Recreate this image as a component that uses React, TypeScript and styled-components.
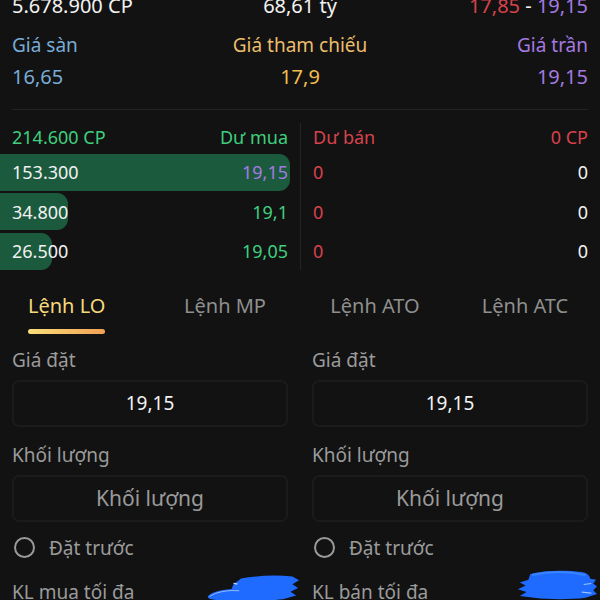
import React from "react";
import styled, { createGlobalStyle } from "styled-components";

const GlobalStyle = createGlobalStyle`
  html, body {
    margin: 0;
    padding: 0;
    background: #121212;
    overflow: hidden;
  }
  body {
    font-family: "Noto Sans", "Open Sans", sans-serif;
    color: #f2f2f2;
  }
`;

const C = {
  blue: "#78acd6",
  yellow: "#ebbd6c",
  purple: "#a47ae0",
  green: "#3fcf7e",
  red: "#d8424c",
  gray: "#9b9b9b",
  white: "#f2f2f2",
};

interface BidRow {
  vol: string;
  price: string;
  priceColor: string;
  width: number;
}

const bids: BidRow[] = [
  { vol: "153.300", price: "19,15", priceColor: C.purple, width: 290 },
  { vol: "34.800", price: "19,1", priceColor: C.green, width: 68 },
  { vol: "26.500", price: "19,05", priceColor: C.green, width: 52 },
];

const tabs = ["Lệnh LO", "Lệnh MP", "Lệnh ATO", "Lệnh ATC"];

const App: React.FC = () => {
  return (
    <Screen>
      <GlobalStyle />
      <Summary>
        <Txt>5.678.900 CP</Txt>
        <Txt align="center">68,61 tỷ</Txt>
        <Txt align="right">
          <Colored color={C.red}>17,85</Colored> - <Colored color={C.purple}>19,15</Colored>
        </Txt>
      </Summary>

      <PriceGrid>
        <Label color={C.blue}>Giá sàn</Label>
        <Label color={C.yellow} align="center">Giá tham chiếu</Label>
        <Label color={C.purple} align="right">Giá trần</Label>
        <Value color={C.blue}>16,65</Value>
        <Value color="#f1bd4e" align="center">17,9</Value>
        <Value color={C.purple} align="right">19,15</Value>
      </PriceGrid>

      <Rule />

      <Book>
        <BuySide>
          <BookHead>
            <Colored color={C.green}>214.600 CP</Colored>
            <Colored color={C.green}>Dư mua</Colored>
          </BookHead>
          {bids.map((b) => (
            <BookRow key={b.vol}>
              <Bar style={{ width: b.width }} />
              <Cell>{b.vol}</Cell>
              <Cell color={b.priceColor}>{b.price}</Cell>
            </BookRow>
          ))}
        </BuySide>
        <SellSide>
          <BookHead>
            <Colored color={C.red}>Dư bán</Colored>
            <Colored color={C.red}>0 CP</Colored>
          </BookHead>
          {[0, 1, 2].map((i) => (
            <BookRow key={i}>
              <Cell color={C.red}>0</Cell>
              <Cell>0</Cell>
            </BookRow>
          ))}
        </SellSide>
      </Book>

      <Tabs>
        {tabs.map((t, i) => (
          <Tab key={t} lead={i === 0}>
            <TabText active={i === 0}>
              {t}
              {i === 0 && <Underline />}
            </TabText>
          </Tab>
        ))}
      </Tabs>

      <Form>
        {["mua", "bán"].map((side) => (
          <Column key={side}>
            <FieldLabel>Giá đặt</FieldLabel>
            <Input>19,15</Input>
            <FieldLabel>Khối lượng</FieldLabel>
            <Input placeholder>Khối lượng</Input>
            <RadioRow>
              <Radio />
              <span>Đặt trước</span>
            </RadioRow>
            <MaxRow>
              <span>KL {side} tối đa</span>
              <Scribble side={side} />
            </MaxRow>
          </Column>
        ))}
      </Form>
    </Screen>
  );
};

// blue marker strokes hiding the amounts in the reference
const Scribble: React.FC<{ side: string }> = ({ side }) =>
  side === "mua" ? (
    <ScribbleSvg width="95" height="30" viewBox="0 0 100 30" offset={-12} lift={-7}>
      <path
        d="M38 6 C55 3 75 2 92 4 L99 8 L92 12 L98 16 L90 20 L96 24 L82 28 C62 30 42 30 22 29 C10 29 2 28 3 25 C5 21 15 18 28 17 L30 12 Z"
        fill="#1f6bff"
      />
      <path d="M5 25 C12 20 24 18 36 19" stroke="#9cc0ff" strokeWidth="1" fill="none" />
      <path d="M30 11 L34 12" stroke="#cfe0ff" strokeWidth="1.2" />
    </ScribbleSvg>
  ) : (
    <ScribbleSvg width="80" height="31" viewBox="0 0 84 32" offset={-9} lift={-10}>
      <path
        d="M14 5 C30 1 50 1 68 3 C74 4 76 7 77 10 L83 11 L80 15 L84 18 L80 22 L84 26 L72 30 C55 32 35 32 18 30 L3 28 L10 24 L1 21 L9 17 L3 14 L12 11 Z"
        fill="#1f6bff"
      />
      <path d="M16 6 C34 2 54 2 72 6" stroke="#3a84ff" strokeWidth="2" fill="none" />
      <path d="M70 16 L78 15 M68 24 L78 25" stroke="#9cc0ff" strokeWidth="1.2" />
    </ScribbleSvg>
  );

const Screen = styled.div`
  width: 600px;
  height: 607px;
  overflow: hidden;
  margin-top: -7px;
`;

const Summary = styled.div`
  display: grid;
  grid-template-columns: 1fr 1fr 1fr;
  padding: 0 12px;
  font-size: 20px;
  line-height: 26px;
`;

const Txt = styled.div<{ align?: string }>`
  text-align: ${(p) => p.align || "left"};
  color: ${C.white};
`;

const Colored = styled.span<{ color: string }>`
  color: ${(p) => p.color};
`;

const PriceGrid = styled.div`
  display: grid;
  grid-template-columns: 1fr 1fr 1fr;
  padding: 13px 12px 0;
  row-gap: 6px;
`;

const Label = styled.div<{ color: string; align?: string }>`
  color: ${(p) => p.color};
  text-align: ${(p) => p.align || "left"};
  font-size: 19px;
  line-height: 26px;
`;

const Value = styled(Label)`
  font-size: 20px;
`;

const Rule = styled.div`
  height: 1px;
  background: #232323;
  margin: 19px 12px 0;
`;

const Book = styled.div`
  display: grid;
  grid-template-columns: 300px 300px;
  margin-top: 13px;
`;

const BuySide = styled.div`
  width: 290px;
  display: flex;
  flex-direction: column;
  gap: 2.5px;
`;

const SellSide = styled.div`
  border-left: 1px solid #242424;
  padding: 0 12px;
  display: flex;
  flex-direction: column;
  gap: 2.5px;
`;

const BookHead = styled.div`
  display: flex;
  justify-content: space-between;
  align-items: center;
  height: 28px;
  font-size: 18px;
  padding-left: 12px;
  padding-right: 2px;
  ${SellSide} & {
    padding: 0;
  }
`;

const BookRow = styled.div`
  position: relative;
  display: flex;
  justify-content: space-between;
  align-items: center;
  height: 37px;
  font-size: 18px;
  padding-left: 12px;
  padding-right: 2px;
  ${SellSide} & {
    padding: 0;
  }
`;

const Bar = styled.div`
  position: absolute;
  left: 0;
  top: 0;
  bottom: 0;
  background: #1c5a3d;
  border-radius: 0 11px 11px 0;
`;

const Cell = styled.span<{ color?: string }>`
  position: relative;
  color: ${(p) => p.color || C.white};
`;

const Tabs = styled.div`
  display: grid;
  grid-template-columns: repeat(4, 1fr);
  margin-top: 22px;
`;

const Tab = styled.div<{ lead?: boolean }>`
  display: flex;
  justify-content: ${(p) => (p.lead ? "flex-start" : "center")};
  padding-left: ${(p) => (p.lead ? "28px" : "0")};
`;

const TabText = styled.div<{ active?: boolean }>`
  position: relative;
  font-size: 20px;
  line-height: 28px;
  padding-bottom: 14px;
  color: ${(p) => (p.active ? "#f7da7c" : "#8f8f8f")};
`;

const Underline = styled.div`
  position: absolute;
  left: 0;
  right: 0;
  bottom: 0;
  height: 5px;
  border-radius: 3px;
  background: linear-gradient(90deg, #f9df7a, #f2a054);
`;

const Form = styled.div`
  display: grid;
  grid-template-columns: 1fr 1fr;
  column-gap: 24px;
  padding: 13px 12px 0;
`;

const Column = styled.div`
  display: flex;
  flex-direction: column;
`;

const FieldLabel = styled.div`
  font-size: 19px;
  line-height: 26px;
  color: ${C.gray};
  margin-bottom: 7px;
`;

const Input = styled.div<{ placeholder?: boolean }>`
  height: 47px;
  box-sizing: border-box;
  border: 2px solid #1b1b1b;
  border-radius: 7px;
  display: flex;
  align-items: center;
  justify-content: center;
  font-size: ${(p) => (p.placeholder ? "21px" : "19px")};
  color: ${(p) => (p.placeholder ? "#9a9a9a" : C.white)};
  margin-bottom: 15px;
`;

const RadioRow = styled.div`
  display: flex;
  align-items: center;
  gap: 14px;
  padding-left: 2px;
  font-size: 19px;
  color: ${C.gray};
  height: 30px;
  margin-top: -4px;
`;

const Radio = styled.div`
  width: 17px;
  height: 17px;
  border: 2px solid #9a9a9a;
  border-radius: 50%;
`;

const MaxRow = styled.div`
  display: flex;
  align-items: flex-start;
  justify-content: space-between;
  font-size: 19px;
  line-height: 26px;
  color: ${C.gray};
  margin-top: 16px;
  height: 26px;
`;

const ScribbleSvg = styled.svg<{ offset: number; lift: number }>`
  flex: none;
  margin-right: ${(p) => p.offset}px;
  margin-top: ${(p) => p.lift}px;
`;

export default App;
